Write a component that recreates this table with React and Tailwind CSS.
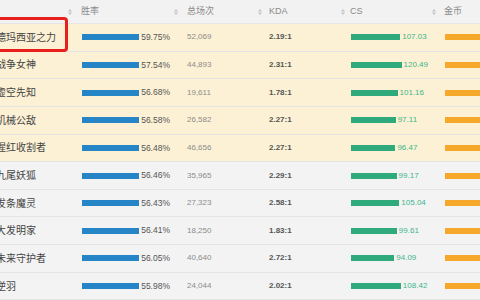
import React from 'react';

// 英雄数据（按胜率排序）
const HEROES = [
    { name: '德玛西亚之力', win: 59.75, games: '52,069', kda: '2.19:1', cs: 107.03, hot: true },
    { name: '战争女神', win: 57.54, games: '44,893', kda: '2.31:1', cs: 120.49, hot: true },
    { name: '虚空先知', win: 56.68, games: '19,611', kda: '1.78:1', cs: 101.16, hot: true },
    { name: '机械公敌', win: 56.58, games: '26,582', kda: '2.27:1', cs: 97.11, hot: true },
    { name: '猩红收割者', win: 56.48, games: '46,656', kda: '2.27:1', cs: 96.47, hot: true },
    { name: '九尾妖狐', win: 56.46, games: '35,965', kda: '2.29:1', cs: 99.17, hot: false },
    { name: '发条魔灵', win: 56.43, games: '27,323', kda: '2.58:1', cs: 105.04, hot: false },
    { name: '大发明家', win: 56.41, games: '18,250', kda: '1.83:1', cs: 99.61, hot: false },
    { name: '未来守护者', win: 56.05, games: '40,640', kda: '2.72:1', cs: 94.09, hot: false },
    { name: '逆羽', win: 55.98, games: '24,044', kda: '2.02:1', cs: 108.42, hot: false },
];

const GRID = 'grid grid-cols-[64px_106px_84px_83px_91px_1fr]';

const SortIcon = () => (
    <svg width="4" height="6" viewBox="0 0 4 6" className="shrink-0">
        <path d="M2 0 L4 2.5 L0 2.5 Z" fill="#c4c4c4" />
        <path d="M2 6 L4 3.5 L0 3.5 Z" fill="#c4c4c4" />
    </svg>
);

const HeadCell = ({ label, gap }) => (
    <div className="flex items-center pl-1">
        <SortIcon />
        <span className={gap}>{label}</span>
    </div>
);

export default function App() {
    return (
        <div
            className="relative w-[480px] h-[300px] overflow-hidden bg-[#f4f4f4] text-[#333]"
            style={{ fontFamily: '"Liberation Sans", "Noto Sans CJK SC", sans-serif' }}
        >
            {/* 表头 */}
            <div className={`${GRID} h-[24px] items-center bg-[#f2f2f2] border-b border-[#e6e6e6] text-[9px] text-[#8a8a8a]`}>
                <div />
                <HeadCell label="胜率" gap="ml-[9px]" />
                <HeadCell label="总场次" gap="ml-[9px]" />
                <HeadCell label="KDA" gap="ml-[7px]" />
                <HeadCell label="CS" gap="ml-[5px]" />
                <HeadCell label="金币" gap="ml-[8px]" />
            </div>

            {/* 数据行 */}
            {HEROES.map((h) => (
                <div
                    key={h.name}
                    className={`${GRID} h-[27.65px] items-center border-b border-[#e4e4e4] ${h.hot ? 'bg-[#fcf1d4]' : 'bg-[#f3f3f3]'}`}
                >
                    <div className="-ml-[4px] text-[10px] whitespace-nowrap text-[#444]">{h.name}</div>
                    <div className="flex items-center pl-[18px] text-[8.5px] text-[#555]">
                        <div className="h-[6px] bg-[#2585c7]" style={{ width: `${h.win * 1.07}px` }} />
                        <span className="ml-[2px]">{h.win.toFixed(2)}%</span>
                    </div>
                    <div className="pl-[17px] text-[8px] text-[#8c8c8c]">{h.games}</div>
                    <div className="pl-[15px] text-[8px] font-bold text-[#555]">{h.kda}</div>
                    <div className="flex items-center pl-[14px] text-[8px] text-[#3db58b]">
                        <div className="h-[6px] bg-[#2eaa7c]" style={{ width: `${h.cs * 0.46}px` }} />
                        <span className="ml-[2px]">{h.cs.toFixed(2)}</span>
                    </div>
                    <div className="flex items-center pl-[17px]">
                        <div className="h-[6px] w-[80px] bg-[#f5a82a]" />
                    </div>
                </div>
            ))}

            {/* 红色标注框 */}
            <div className="absolute left-[-10px] top-[17px] w-[78px] h-[35px] border-[3px] border-[#e8201c] rounded-[4px]" />
        </div>
    );
}
